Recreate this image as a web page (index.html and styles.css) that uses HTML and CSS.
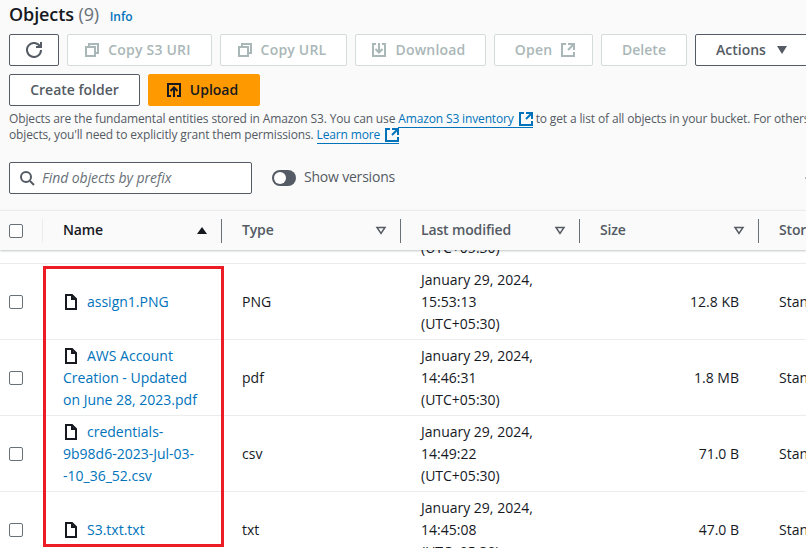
FILE: index.html
```html
<!DOCTYPE html>
<html lang="en">

<head>
    <meta charset="UTF-8">
    <meta name="viewport" content="width=device-width, initial-scale=1.0">

    <title>Objects</title>
    <link rel="stylesheet" href="styles.css">
</head>

<body>
    <div class="page">
        <div class="top">
            <h1 class="title">Objects <span class="count">(9)</span> <a class="info">Info</a></h1>

            <div class="toolbar">
                <button class="btn refresh">
                    <svg class="icon" viewBox="0 0 16 16"><path d="M10 5h5V0"/><path d="M15 8a7 7 0 1 1-.9-3.45"/></svg>
                </button>
                <button class="btn off lead copy-uri">
                    <svg class="icon" viewBox="0 0 16 16"><path d="M2 5h9v9H2z"/><path d="M5 5V2h9v9h-3"/></svg>
                    Copy S3 URI
                </button>
                <button class="btn off lead copy-url">
                    <svg class="icon" viewBox="0 0 16 16"><path d="M2 5h9v9H2z"/><path d="M5 5V2h9v9h-3"/></svg>
                    Copy URL
                </button>
                <button class="btn off lead download">
                    <svg class="icon" viewBox="0 0 16 16"><path d="M5 2H2v12h12V2h-3"/><path d="M8 1v9"/><path d="M4.500 7 8 10.500 11.500 7"/></svg>
                    Download
                </button>
                <button class="btn off open">
                    Open
                    <svg class="icon" viewBox="0 0 16 16"><path d="M14 8V2H8"/><path d="M14 2 8 8"/><path d="M6 2H2v12h12v-4"/></svg>
                </button>
                <button class="btn off delete">Delete</button>
                <button class="btn actions">
                    Actions
                    <svg class="caret" viewBox="0 0 16 16"><path d="M3 4h10l-5 8z"/></svg>
                </button>
            </div>

            <div class="toolbar">
                <button class="btn create">Create folder</button>
                <button class="btn lead upload">
                    <svg class="icon" viewBox="0 0 16 16"><path d="M5 14H2V2h12v12h-3"/><path d="M8 15V6"/><path d="M4.500 9 8 5.500 11.500 9"/></svg>
                    Upload
                </button>
            </div>

            <p class="desc">
                Objects are the fundamental entities stored in Amazon S3. You can use
                <a class="ext">Amazon S3 inventory <svg class="icon" viewBox="0 0 16 16"><path d="M14 8V2H8"/><path d="M14 2 8 8"/><path d="M6 2H2v12h12v-4"/></svg></a>
                to get a list of all objects in your bucket. For others to access your<br>
                objects, you'll need to explicitly grant them permissions.
                <a class="ext">Learn more <svg class="icon" viewBox="0 0 16 16"><path d="M14 8V2H8"/><path d="M14 2 8 8"/><path d="M6 2H2v12h12v-4"/></svg></a>
            </p>

            <div class="filters">
                <div class="search">
                    <svg class="icon" viewBox="0 0 16 16"><circle cx="7" cy="7" r="5"/><path d="m11 11 4 4"/></svg>
                    <span>Find objects by prefix</span>
                </div>
                <span class="toggle"><span class="knob"></span></span>
                <span class="toggle-label">Show versions</span>
                <span class="pager"></span>
            </div>
        </div>

        <div class="table">
            <div class="head cols">
                <div class="cell check-cell"><span class="check"></span></div>
                <div class="cell th first">Name
                    <svg class="sort" viewBox="0 0 16 16"><path class="solid" d="M3 12h10L8 5z"/></svg>
                </div>
                <div class="cell th">Type
                    <svg class="sort" viewBox="0 0 16 16"><path d="M4 5.500h8l-4 6z"/></svg>
                </div>
                <div class="cell th">Last modified
                    <svg class="sort" viewBox="0 0 16 16"><path d="M4 5.500h8l-4 6z"/></svg>
                </div>
                <div class="cell th">Size
                    <svg class="sort" viewBox="0 0 16 16"><path d="M4 5.500h8l-4 6z"/></svg>
                </div>
                <div class="cell th last">Storage class</div>
            </div>

            <div class="rows">
                <div class="row cols scrolled">
                    <div class="cell check-cell"></div>
                    <div class="cell"></div>
                    <div class="cell"></div>
                    <div class="cell td">January 29, 2024,<br>15:50:01<br>(UTC+05:30)</div>
                    <div class="cell"></div>
                    <div class="cell"></div>
                </div>

                <div class="row cols">
                    <div class="cell check-cell"><span class="check"></span></div>
                    <div class="cell td name"><a><svg class="file" viewBox="0 0 16 16"><path d="M13 15H3V1h6l4 4z"/><path d="M9 1v4h4"/></svg>assign1.PNG</a></div>
                    <div class="cell td">PNG</div>
                    <div class="cell td">January 29, 2024,<br>15:53:13<br>(UTC+05:30)</div>
                    <div class="cell td size">12.8 KB</div>
                    <div class="cell td">Standard</div>
                </div>

                <div class="row cols">
                    <div class="cell check-cell"><span class="check"></span></div>
                    <div class="cell td name"><a><svg class="file" viewBox="0 0 16 16"><path d="M13 15H3V1h6l4 4z"/><path d="M9 1v4h4"/></svg>AWS Account<br>Creation - Updated<br>on June 28, 2023.pdf</a></div>
                    <div class="cell td">pdf</div>
                    <div class="cell td">January 29, 2024,<br>14:46:31<br>(UTC+05:30)</div>
                    <div class="cell td size">1.8 MB</div>
                    <div class="cell td">Standard</div>
                </div>

                <div class="row cols">
                    <div class="cell check-cell"><span class="check"></span></div>
                    <div class="cell td name"><a><svg class="file" viewBox="0 0 16 16"><path d="M13 15H3V1h6l4 4z"/><path d="M9 1v4h4"/></svg>credentials-<br>9b98d6-2023-Jul-03-<br>-10_36_52.csv</a></div>
                    <div class="cell td">csv</div>
                    <div class="cell td">January 29, 2024,<br>14:49:22<br>(UTC+05:30)</div>
                    <div class="cell td size">71.0 B</div>
                    <div class="cell td">Standard</div>
                </div>

                <div class="row cols">
                    <div class="cell check-cell"><span class="check"></span></div>
                    <div class="cell td name"><a><svg class="file" viewBox="0 0 16 16"><path d="M13 15H3V1h6l4 4z"/><path d="M9 1v4h4"/></svg>S3.txt.txt</a></div>
                    <div class="cell td">txt</div>
                    <div class="cell td">January 29, 2024,<br>14:45:08<br>(UTC+05:30)</div>
                    <div class="cell td size">47.0 B</div>
                    <div class="cell td">Standard</div>
                </div>
            </div>
        </div>

        <!-- red box drawn over the name column -->
        <div class="highlight"></div>
    </div>
</body>

</html>
```

FILE: styles.css
```css
* {
    box-sizing: border-box;
}

body {
    margin: 0;
    font-family: 'Open Sans', 'Noto Sans', sans-serif;
    font-size: 14px;
    color: #16191f;
    background-color: #fafafa;
}

svg {
    fill: none;
    stroke: currentColor;
    stroke-width: 2;
    flex-shrink: 0;
}

.page {
    position: relative;
    width: 806px;
    height: 548px;
    overflow: hidden;
}

.top {
    height: 210px;
    padding: 3px 0 0 9px;
    overflow: hidden;
}

.title {
    margin: 0;
    height: 22px;
    font-size: 18px;
    line-height: 22px;
    font-weight: 600;
    letter-spacing: -0.1px;
    white-space: nowrap;
}

.count {
    font-weight: 400;
    color: #687078;
}

.info {
    margin-left: 6px;
    font-size: 12px;
    font-weight: 600;
    letter-spacing: 0;
    color: #0073bb;
}

.toolbar {
    display: flex;
    gap: 8px;
    margin-top: 9px;
}

.toolbar + .toolbar {
    margin-top: 8px;
}

.btn {
    display: flex;
    align-items: center;
    justify-content: center;
    gap: 8px;
    flex-shrink: 0;
    height: 32px;
    padding: 0 0 2px;
    font-family: inherit;
    font-size: 14px;
    font-weight: 600;
    color: #545b64;
    background-color: #fff;
    border: 1px solid #545b64;
    border-radius: 2px;
}

.btn .icon {
    margin-bottom: -2px;
}

.lead {
    padding-right: 4px;
}

.icon {
    width: 16px;
    height: 16px;
}

.off {
    color: #aab7b8;
    border-color: #d5dbdb;
    letter-spacing: 0.2px;
}

.refresh {
    width: 50px;
}

.copy-uri {
    width: 145px;
}

.copy-url {
    width: 127px;
}

.download {
    width: 131px;
}

.open {
    width: 99px;
    padding-left: 4px;
}

.delete {
    width: 86px;
    letter-spacing: 0;
}

.actions {
    justify-content: flex-start;
    width: 130px;
    padding-left: 20px;
}

.caret {
    width: 16px;
    height: 16px;
    margin-bottom: -2px;
    fill: currentColor;
    stroke: none;
}

.create {
    width: 131px;
}

.upload {
    width: 112px;
    color: #16191f;
    background-color: #ff9900;
    border-color: #ff9900;
}

.desc {
    margin: 5px 0 0;
    font-size: 12px;
    line-height: 16px;
    letter-spacing: -0.14px;
    color: #545b64;
    white-space: nowrap;
}

.ext {
    color: #0073bb;
    border-bottom: 1px solid #0073bb;
}

/* negative margins keep the icon from stretching the 16px line */
.ext .icon {
    margin: -2px -1px -2px 1px;
    vertical-align: -2px;
}

.filters {
    display: flex;
    align-items: center;
    margin-top: 19px;
}

.search {
    display: flex;
    align-items: center;
    gap: 7px;
    width: 243px;
    height: 32px;
    padding: 0 0 0 9px;
    background-color: #fff;
    border: 1px solid #545b64;
    border-radius: 2px;
    color: #545b64;
}

.search span {
    margin-top: -2px;
    font-style: italic;
    letter-spacing: -0.05px;
    color: #687078;
}

.toggle {
    display: flex;
    align-items: center;
    width: 24px;
    height: 16px;
    margin-left: 20px;
    padding-left: 2px;
    background-color: #545b64;
    border-radius: 8px;
}

.knob {
    width: 12px;
    height: 12px;
    background-color: #fff;
    border-radius: 50%;
}

.toggle-label {
    margin: -3px 0 0 8px;
    letter-spacing: -0.2px;
    color: #545b64;
}

.pager {
    width: 1px;
    height: 2px;
    margin-left: auto;
    background-color: #aab7b8;
}

.table {
    height: 338px;
    background-color: #fff;
}

.cols {
    display: grid;
    grid-template-columns: 43px 179px 179px 179px 179px 47px;
}

.cell {
    min-width: 0;
    white-space: nowrap;
}

.head {
    position: relative;
    z-index: 1;
    height: 40px;
    background-color: #fafafa;
    border-top: 1px solid #eaeded;
    box-shadow: 0 1px 2px rgba(0, 28, 36, 0.25);
}

.check-cell {
    display: flex;
    align-items: center;
    padding-left: 9px;
}

.head .check-cell {
    border-right: 1px solid #eaeded;
    height: 24px;
    align-self: center;
}

.check {
    width: 14px;
    height: 14px;
    background-color: #fff;
    border: 1px solid #687078;
    border-radius: 2px;
}

.th {
    display: flex;
    align-items: center;
    justify-content: space-between;
    align-self: center;
    height: 24px;
    padding: 0 11px 2px 20px;
    font-weight: 600;
    letter-spacing: -0.15px;
    color: #545b64;
    border-right: 1px solid #687078;
}

.first {
    color: #16191f;
}

.last {
    border-right: none;
    padding-right: 0;
    overflow: hidden;
    justify-content: flex-start;
}

.sort {
    width: 16px;
    height: 16px;
    stroke-width: 1.5;
}

.solid {
    fill: #16191f;
    stroke: none;
}

.rows {
    height: 298px;
    overflow: hidden;
}

.row {
    height: 76px;
    align-items: center;
    border-bottom: 1px solid #eaeded;
}

.scrolled {
    margin-top: -62px;
}

.td {
    padding-left: 20px;
    line-height: 22px;
}

.name a {
    color: #0073bb;
    display: block;
}

.file {
    width: 16px;
    height: 16px;
    margin-right: 8px;
    color: #16191f;
    vertical-align: -3px;
}

.size {
    padding: 0 20px 0 0;
    text-align: right;
}

.highlight {
    position: absolute;
    left: 43px;
    top: 266px;
    width: 181px;
    height: 281px;
    border: 3px solid #ed1c24;
}
```
